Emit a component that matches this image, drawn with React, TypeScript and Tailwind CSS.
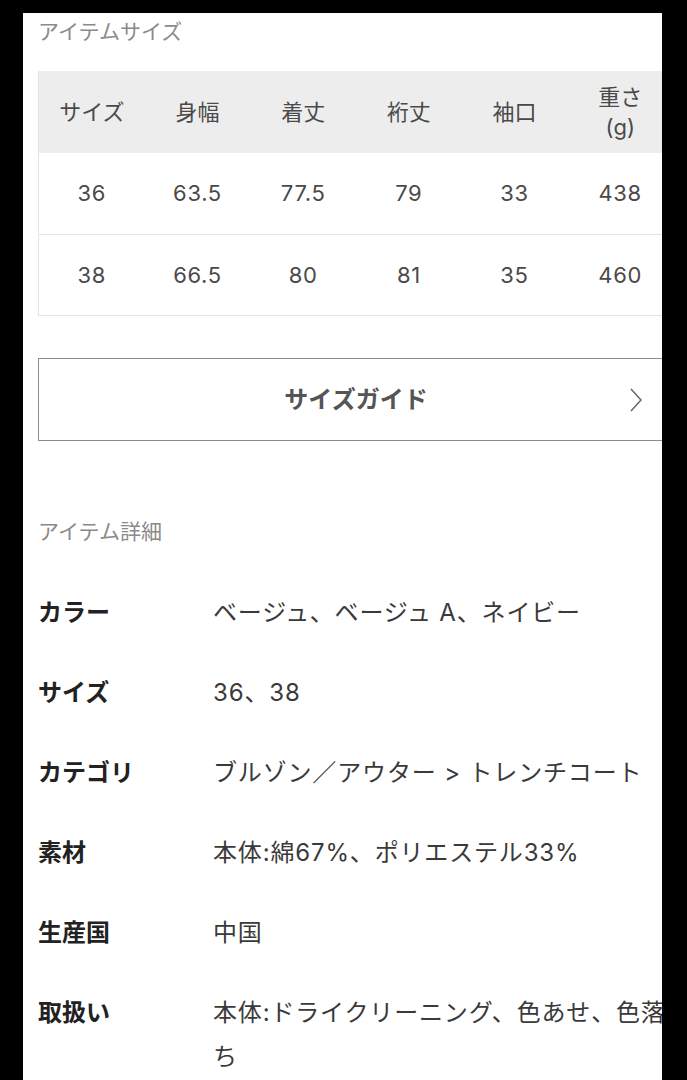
const sizeHeaders = ['サイズ', '身幅', '着丈', '裄丈', '袖口']

const sizeRows = [
  ['36', '63.5', '77.5', '79', '33', '438'],
  ['38', '66.5', '80', '81', '35', '460'],
]

const details: [string, string][] = [
  ['カラー', 'ベージュ、ベージュ A、ネイビー'],
  ['サイズ', '36、38'],
  ['カテゴリ', 'ブルゾン／アウター > トレンチコート'],
  ['素材', '本体:綿67%、ポリエステル33%'],
  ['生産国', '中国'],
  ['取扱い', '本体:ドライクリーニング、色あせ、色落ち'],
]

const font = { fontFamily: 'Inter, "Noto Sans CJK JP", sans-serif' }

export default function App() {
  return (
    <div className="h-[1080px] w-[687px] overflow-hidden bg-black pt-[13px] pl-[23px]" style={font}>
      <div className="h-[1067px] w-[639px] overflow-hidden bg-white">
        <div className="w-[651px] pl-[15px] pt-[5px]">
          <h2 className="text-[21px] leading-[28px] text-[#8a8a8a]">アイテムサイズ</h2>

          <div className="mt-[25px] border-x border-b border-[#e4e4e4] text-[#4a4a4a]">
            <div className="grid h-[82px] grid-cols-6 items-center bg-[#ededed] text-center text-[22px]">
              {sizeHeaders.map((h) => (
                <div key={h}>{h}</div>
              ))}
              <div className="leading-[30px]">
                重さ
                <br />
                (g)
              </div>
            </div>
            {sizeRows.map((row, i) => (
              <div
                key={row[0]}
                className={`grid h-[81px] grid-cols-6 items-center text-center text-[22px] tracking-[0.03em] ${i > 0 ? 'border-t border-[#e4e4e4]' : ''}`}
              >
                {row.map((v, j) => (
                  <div key={j}>{v}</div>
                ))}
              </div>
            ))}
          </div>

          <button className="relative mt-[42px] flex h-[83px] w-full items-center justify-center border-[1.5px] border-[#8c8c8c] bg-white">
            <span className="text-[24px] font-bold text-[#555]">サイズガイド</span>
            <svg
              className="absolute top-1/2 right-[31px] -translate-y-1/2"
              width="12"
              height="24"
              viewBox="0 0 12 24"
              fill="none"
            >
              <polyline points="1,1 11,12 1,23" stroke="#666" strokeWidth="1.5" />
            </svg>
          </button>

          <h2 className="mt-[77px] text-[21px] leading-[28px] text-[#8a8a8a]">アイテム詳細</h2>

          <dl className="mt-[27px]">
            {details.map(([label, value]) => (
              <div key={label} className="flex py-[18px] text-[24px] leading-[44px]">
                <dt className="w-[175px] shrink-0 font-bold text-[#222]">{label}</dt>
                <dd className="flex-1 tracking-[0.035em] text-[#3a3a3a]">{value}</dd>
              </div>
            ))}
          </dl>
        </div>
      </div>
    </div>
  )
}
